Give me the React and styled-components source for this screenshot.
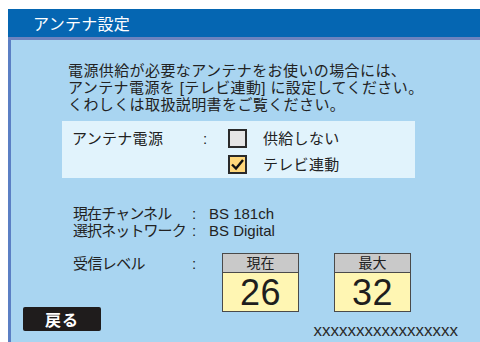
import React from 'react';
import styled, { createGlobalStyle } from 'styled-components';

const GlobalStyle = createGlobalStyle`
  html, body {
    margin: 0;
    background: #ffffff;
  }
  body {
    font-family: "Liberation Sans", "Noto Sans CJK JP", sans-serif;
    color: #222222;
  }
`;

const Screen = styled.div`
  box-sizing: border-box;
  width: 480px;
  height: 342px;
  padding: 9px 0 0 8px;
  overflow: hidden;
`;

const Window = styled.div`
  display: flex;
  flex-direction: column;
  height: 333px;
`;

const TitleBar = styled.div`
  flex-shrink: 0;
  height: 28px;
  display: flex;
  align-items: center;
  padding-left: 25px;
  background: #0566b2;
  border-bottom: 3px solid #6c83bf;
  color: #ffffff;
  font-size: 16px;
  letter-spacing: 0.3px;
`;

const Body = styled.div`
  flex: 1;
  min-height: 0;
  overflow: hidden;
  display: flex;
  flex-direction: column;
  padding-top: 22px;
  background: #a9d5f1;
  border-left: 3px solid #5b7fc4;
`;

const Message = styled.p`
  margin: 0 0 0 57px;
  font-size: 15px;
  line-height: 17px;
  letter-spacing: 0.4px;
  white-space: nowrap;
`;

const Panel = styled.div`
  box-sizing: border-box;
  width: 353px;
  margin: 8px 0 0 51px;
  padding: 8px 0 4px 10px;
  background: #e1f3fc;
  display: grid;
  grid-template-columns: 131px 25px 19px auto;
  grid-auto-rows: 19px;
  row-gap: 7px;
  align-items: center;
  font-size: 15px;
`;

const Label = styled.span`
  line-height: 17px;
  letter-spacing: 0.3px;
  white-space: nowrap;
`;

const Option = styled.span`
  margin-left: 16px;
  line-height: 17px;
  letter-spacing: 0.3px;
  white-space: nowrap;
`;

const Box = styled.span`
  box-sizing: border-box;
  width: 19px;
  height: 19px;
  border: 2px solid #2a2a2a;
  background: ${p => (p.checked ? '#ffd77a' : '#e5e5e5')};
  display: flex;
  align-items: center;
  justify-content: center;
`;

const Info = styled.div`
  margin: 27px 0 0 62px;
  display: grid;
  grid-template-columns: 119px 17px auto;
  font-size: 15px;
  line-height: 17px;
  white-space: nowrap;
`;

const Name = styled.span`
  letter-spacing: -0.9px;
`;

const LevelRow = styled.div`
  margin: 14px 0 0 62px;
  display: grid;
  grid-template-columns: 119px 30px 77px 77px;
  align-items: start;
  font-size: 15px;
  line-height: 17px;
  white-space: nowrap;
`;

const LevelText = styled.span`
  margin-top: 2px;
  letter-spacing: ${p => (p.$tight ? '-0.6px' : '0')};
`;

const Meter = styled.div`
  box-sizing: border-box;
  width: 77px;
  height: 59px;
  margin-left: ${p => p.$offset || 0}px;
  border: 1px solid #4a4a4a;
  display: flex;
  flex-direction: column;
  background: #fff6b3;
`;

const MeterHead = styled.div`
  height: 18px;
  background: #c9c9c9;
  border-bottom: 1px solid #4a4a4a;
  display: flex;
  align-items: center;
  justify-content: center;
  font-size: 14px;
  line-height: 16px;
`;

const MeterValue = styled.div`
  flex: 1;
  display: flex;
  align-items: center;
  justify-content: center;
  font-size: 36px;
  color: #1e1e1e;
  letter-spacing: 0.5px;
`;

const Footer = styled.div`
  margin-top: -5px;
  display: flex;
  justify-content: space-between;
  align-items: flex-start;
`;

const BackButton = styled.div`
  width: 78px;
  height: 24px;
  margin-left: 12px;
  background: #1f1c1c;
  border-radius: 2px;
  color: #ffffff;
  font-size: 16px;
  font-weight: bold;
  display: flex;
  align-items: center;
  justify-content: center;
  letter-spacing: 1px;
`;

const Code = styled.span`
  margin: 14px 22px 0 0;
  font-size: 17px;
  line-height: 20px;
  color: #2a2a2a;
`;

const Check = () => (
  <svg width="15" height="15" viewBox="0 0 15 15">
    <path d="M2 7.5 L6 11.5 L13 3" fill="none" stroke="#111" strokeWidth="2.4" />
  </svg>
);

export default function App() {
  return (
    <>
      <GlobalStyle />
      <Screen>
        <Window>
          <TitleBar>アンテナ設定</TitleBar>
          <Body>
            <Message>
              電源供給が必要なアンテナをお使いの場合には、<br />
              アンテナ電源を [テレビ連動] に設定してください。<br />
              くわしくは取扱説明書をご覧ください。
            </Message>
            <Panel>
              <Label>アンテナ電源</Label>
              <Label>:</Label>
              <Box />
              <Option>供給しない</Option>
              <span />
              <span />
              <Box checked><Check /></Box>
              <Option>テレビ連動</Option>
            </Panel>
            <Info>
              <Name>現在チャンネル</Name>
              <span>:</span>
              <span>BS 181ch</span>
              <Name>選択ネットワーク</Name>
              <span>:</span>
              <span>BS Digital</span>
            </Info>
            <LevelRow>
              <LevelText $tight>受信レベル</LevelText>
              <LevelText>:</LevelText>
              <Meter>
                <MeterHead>現在</MeterHead>
                <MeterValue>26</MeterValue>
              </Meter>
              <Meter $offset={35}>
                <MeterHead>最大</MeterHead>
                <MeterValue>32</MeterValue>
              </Meter>
            </LevelRow>
            <Footer>
              <BackButton>戻る</BackButton>
              <Code>xxxxxxxxxxxxxxxxx</Code>
            </Footer>
          </Body>
        </Window>
      </Screen>
    </>
  );
}
